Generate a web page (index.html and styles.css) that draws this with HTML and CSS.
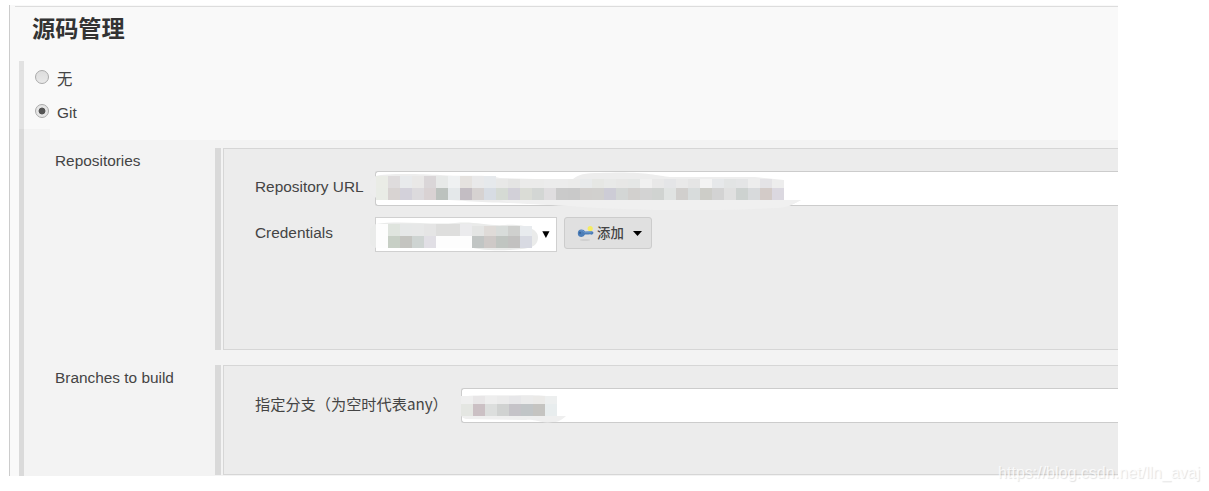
FILE: index.html
```
<!DOCTYPE html>
<html lang="zh-CN">
<head>
	<meta charset="UTF-8"/>
	<title>源码管理</title>
	<link rel="stylesheet" href="styles.css">
</head>
<body>
	<div class="panel">
		<h2>源码管理</h2>

		<div class="scm-list">
			<label class="scm"><span class="radio"></span><span class="zh">无</span></label>
			<label class="scm"><span class="radio checked"></span>Git</label>
		</div>
		<div class="scm-notch"><div></div></div>

		<div class="settings">
			<div class="setting repositories">
				<div class="name">Repositories</div>
				<div class="handle"></div>
				<div class="box">
					<div class="field">
						<label class="label">Repository URL</label>
						<div class="input url">
							<svg class="mask" width="440" height="44" viewBox="370 166 440 44">
								<path fill="#ededed" d="M376 176C386 173 422 174 440 175C470 177 484 174 500 178L572 180C578 174 585 173 600 173C640 171 655 175 670 177L755 177L784 180V200H801C793 204 788 208 775 208C710 212 610 210 570 206L520 203C480 203 460 200 430 199L384 199C365 199 365 180 376 176Z"/>
								<path fill="#f0f0f0" d="M500 200H801C793 204 788 208 775 208C710 212 610 210 570 206L510 203Z"/>
								<g id="url-blocks" shape-rendering="crispEdges"></g>
							</svg>
						</div>
					</div>
					<div class="field">
						<label class="label">Credentials</label>
						<div class="input select">
							<svg class="mask" width="180" height="44" viewBox="370 212 180 44">
								<path fill="#eaebea" d="M376 224C400 220 430 225 455 223C475 221 485 226 505 225C525 224 538 229 538 237C538 248 528 249 510 250C490 251 475 249 470 247L376 248C366 244 366 228 376 224Z"/>
								<path fill="#fdfdfd" d="M376 224h12v24h-12zM436 236h36v12h-36z"/>
								<g id="cred-blocks" shape-rendering="crispEdges"></g>
							</svg>
							<svg class="caret" width="8" height="7" viewBox="0 0 8 7"><path d="M0.3 0.3h7.2L3.9 7z"/></svg>
						</div>
						<button class="add">
							<svg class="key" width="17" height="17" viewBox="0 0 17 17">
								<ellipse cx="8" cy="15" rx="5" ry="1" fill="#d0d0d0"/>
								<circle cx="13.2" cy="3.6" r="2.6" fill="#f5ec62"/>
								<path fill="#4c7eb8" d="M.8 8.2Q.8 4.4 4.4 4.4Q7.4 4.4 8 6.4L15 6.2Q16.8 6.8 16.4 8.2L15 9.8L13 9.2L11.5 9.6L8 9.6Q7 12 4.5 12Q.8 12 .8 8.2Z"/>
								<path fill="none" stroke="#709dd2" stroke-width=".8" d="M3.5 5.8Q6 5 7.5 7.3L14.5 7.3"/>
								<circle cx="3" cy="7.8" r=".9" fill="#2f5688"/>
							</svg>
							<span>添加</span>
							<svg class="down" width="9" height="5" viewBox="0 0 9 5"><path d="M0 0h9L4.5 5z"/></svg>
						</button>
					</div>
				</div>
			</div>

			<div class="setting branches">
				<div class="name">Branches to build</div>
				<div class="handle"></div>
				<div class="box">
					<div class="field">
						<label class="label zh">指定分支（为空时代表any）</label>
						<div class="input branch">
							<svg class="mask" width="120" height="44" viewBox="455 383 120 44">
								<path fill="#efefef" d="M460 397C475 394 500 396 520 395C540 395 556 396 556 400V416H565C560 420 558 422 552 422C540 424 535 419 525 420L465 419Q460 418 460 414Z"/>
								<g id="branch-blocks" shape-rendering="crispEdges"></g>
							</svg>
						</div>
					</div>
				</div>
			</div>
		</div>
	</div>
	<div class="watermark">https://blog.csdn.net/lln_avaj</div>

	<script>
		// rows of 12px blocks, "-" leaves a gap
		function drawBlocks(id, x, y, height, colors){
			var html = ''
			colors.split(' ').forEach((color, i) => {
				if(color !== '-'){
					html += `<rect x="${x + i * 12}" y="${y}" width="12" height="${height}" fill="#${color}"/>`
				}
			})
			document.getElementById(id).innerHTML += html
		}

		drawBlocks('url-blocks', 376, 176, 12, 'eaece6 dfdcdd e8eaec e9e8e7 dad6d8 e7e9e8 eff1f2 e5e2df e9e9ea e6e9ec')
		drawBlocks('url-blocks', 496, 179, 9, 'e8e8e7 e4e4e3 ebebea ebebea ececec ececec ebebea e8eaeb e6e7e4 e8e9e8 e7e7e6 e5e7e6 f0f0f0 e8e8e8 e4e5e7 e9e9e9 e5e5e5 f3f3f3 e6e8ea e2e4e4 e4e5e6 ededed e4e3e6')
		drawBlocks('url-blocks', 376, 188, 12, 'e9ece6 d8d3d2 d3d1da dcdadd d9d2d3 bcc2be e4e8ea c3bdc3 d6d2d1 d7dce3 d5dad4 d2d0d8 dadcd6 d3d6d4 dfdddf cacaca c9c9c9 d1cfcd d1d0ce cdccd6 d3d6d5 d2d0ce d3d3d3 d0d3d1 e0e3e2 d1cfcd d8dcdc cdcdc8 d3d3d3 e0e0e0 cdd2d0 d8dadc d3cbc8 cfcfcc')
		drawBlocks('url-blocks', 772, 188, 12, 'dbd8e0')
		drawBlocks('cred-blocks', 388, 224, 12, 'dfe4de e6e8e8 e7e8e8 e5e5e5 dededd dededd ebebed')
		drawBlocks('cred-blocks', 472, 226, 10, 'e4e5e4 dfdbd8 d8dcda cfd0ce e8ebee')
		drawBlocks('cred-blocks', 388, 236, 12, 'c7cfc5 c4c4c0 ced4d2 e1dfe5 - - - c1c5c4 cec9c7 c0c5c1 c2c1c0 d8dae2')
		drawBlocks('branch-blocks', 460, 396, 8, 'efefef e8e6e7 eeeeee ebebeb e7e7e9 ebebeb ebeae8 edefef')
		drawBlocks('branch-blocks', 460, 404, 12, 'e4e6e2 cbc0c4 dcdedd d0d2d1 c5c3c8 c1c5c7 c5c4c1 e8edee')
	</script>
</body>
</html>
```
FILE: styles.css
```
*{
	box-sizing: border-box;
	margin: 0;
	padding: 0;
}
body{
	font-family: "Liberation Sans", "Noto Sans CJK SC", sans-serif;
	font-size: 15.4px;
	color: #444;
	background: #fff;
	height: 491px;
	padding-top: 5px;
	overflow: hidden;
}
.panel{
	width: 1109px;
	height: 471px;
	margin-left: 9px;
	border-left: 1px solid #ccc;
	background: linear-gradient(#ddd, #ddd) 5px 1px / 1110px 1px no-repeat #f9f9f9;
	overflow: hidden;
}
h2{
	height: 56px;
	padding: 4px 0 0 22px;
	font-size: 23.2px;
	line-height: 41px;
	color: #333;
}
.scm-list{
	height: 68px;
	margin-left: 9px;
	border-left: 5px solid #e2e2e2;
	padding-left: 11px;
}
.scm{
	display: flex;
	height: 34px;
	line-height: 35px;
}
.radio{
	width: 14px;
	height: 14px;
	margin: 9px 8px 0 0;
	border: 1px solid #aaa;
	border-radius: 50%;
	background: linear-gradient(#ddd, #e8e8e8);
}
.radio.checked{
	background: radial-gradient(circle, #555 0 3px, #e6e6e6 3.8px);
}
.zh{
	font-family: "Noto Sans CJK SC", sans-serif;
}
.scm-notch, .settings{
	margin-left: 9px;
	border-left: 5px solid #dadada;
}
.scm-notch div{
	width: 26px;
	height: 11px;
	background: #f3f3f3;
}
.settings{
	height: 336px;
	padding-top: 8px;
	background: #f3f3f3;
}
.setting{
	display: flex;
	margin-bottom: 15px;
}
.repositories{
	height: 202px;
}
.branches{
	height: 110px;
}
.name{
	width: 191px;
	padding: 4px 0 0 31px;
	line-height: 18px;
}
.handle{
	width: 6px;
	margin-right: 2px;
	background: #d9d9d9;
}
.box{
	flex: 1;
	padding: 22px 0 0 31px;
	border: 1px solid #d6d6d6;
	border-right: none;
	background: #ececec;
}
.field{
	display: flex;
	align-items: flex-start;
	height: 46px;
}
.label{
	width: 120px;
	line-height: 32px;
	white-space: nowrap;
}
.label.zh{
	width: 206px;
	font-size: 15.2px;
	line-height: 31px;
}
.input{
	position: relative;
	flex: 1;
	height: 35px;
	border: 1px solid #ccc;
	border-right: none;
	border-radius: 3px 0 0 3px;
	background: #fff;
}
.input.select{
	flex: none;
	width: 182px;
	border: 1px solid #d0d0d0;
	border-radius: 0;
}
.mask{
	position: absolute;
	left: -6px;
	top: -6px;
}
.caret{
	position: absolute;
	right: 6px;
	top: 13px;
}
.add{
	display: flex;
	align-items: center;
	width: 88px;
	height: 32px;
	margin-left: 7px;
	padding-left: 12px;
	border: 1px solid #ccc;
	border-radius: 3px;
	background: #e0e0e0;
	font: 500 13.4px "Noto Sans CJK SC", sans-serif;
	color: #444;
}
.add span{
	margin-top: -2px;
}
.key{
	margin-right: 3px;
}
.down{
	margin-left: 9px;
}
.watermark{
	position: absolute;
	right: 9px;
	top: 463px;
	font-size: 16px;
	line-height: 20px;
	color: rgba(255, 255, 255, .8);
	text-shadow: 1px 1px 1px rgba(0, 0, 0, .12);
}
```
